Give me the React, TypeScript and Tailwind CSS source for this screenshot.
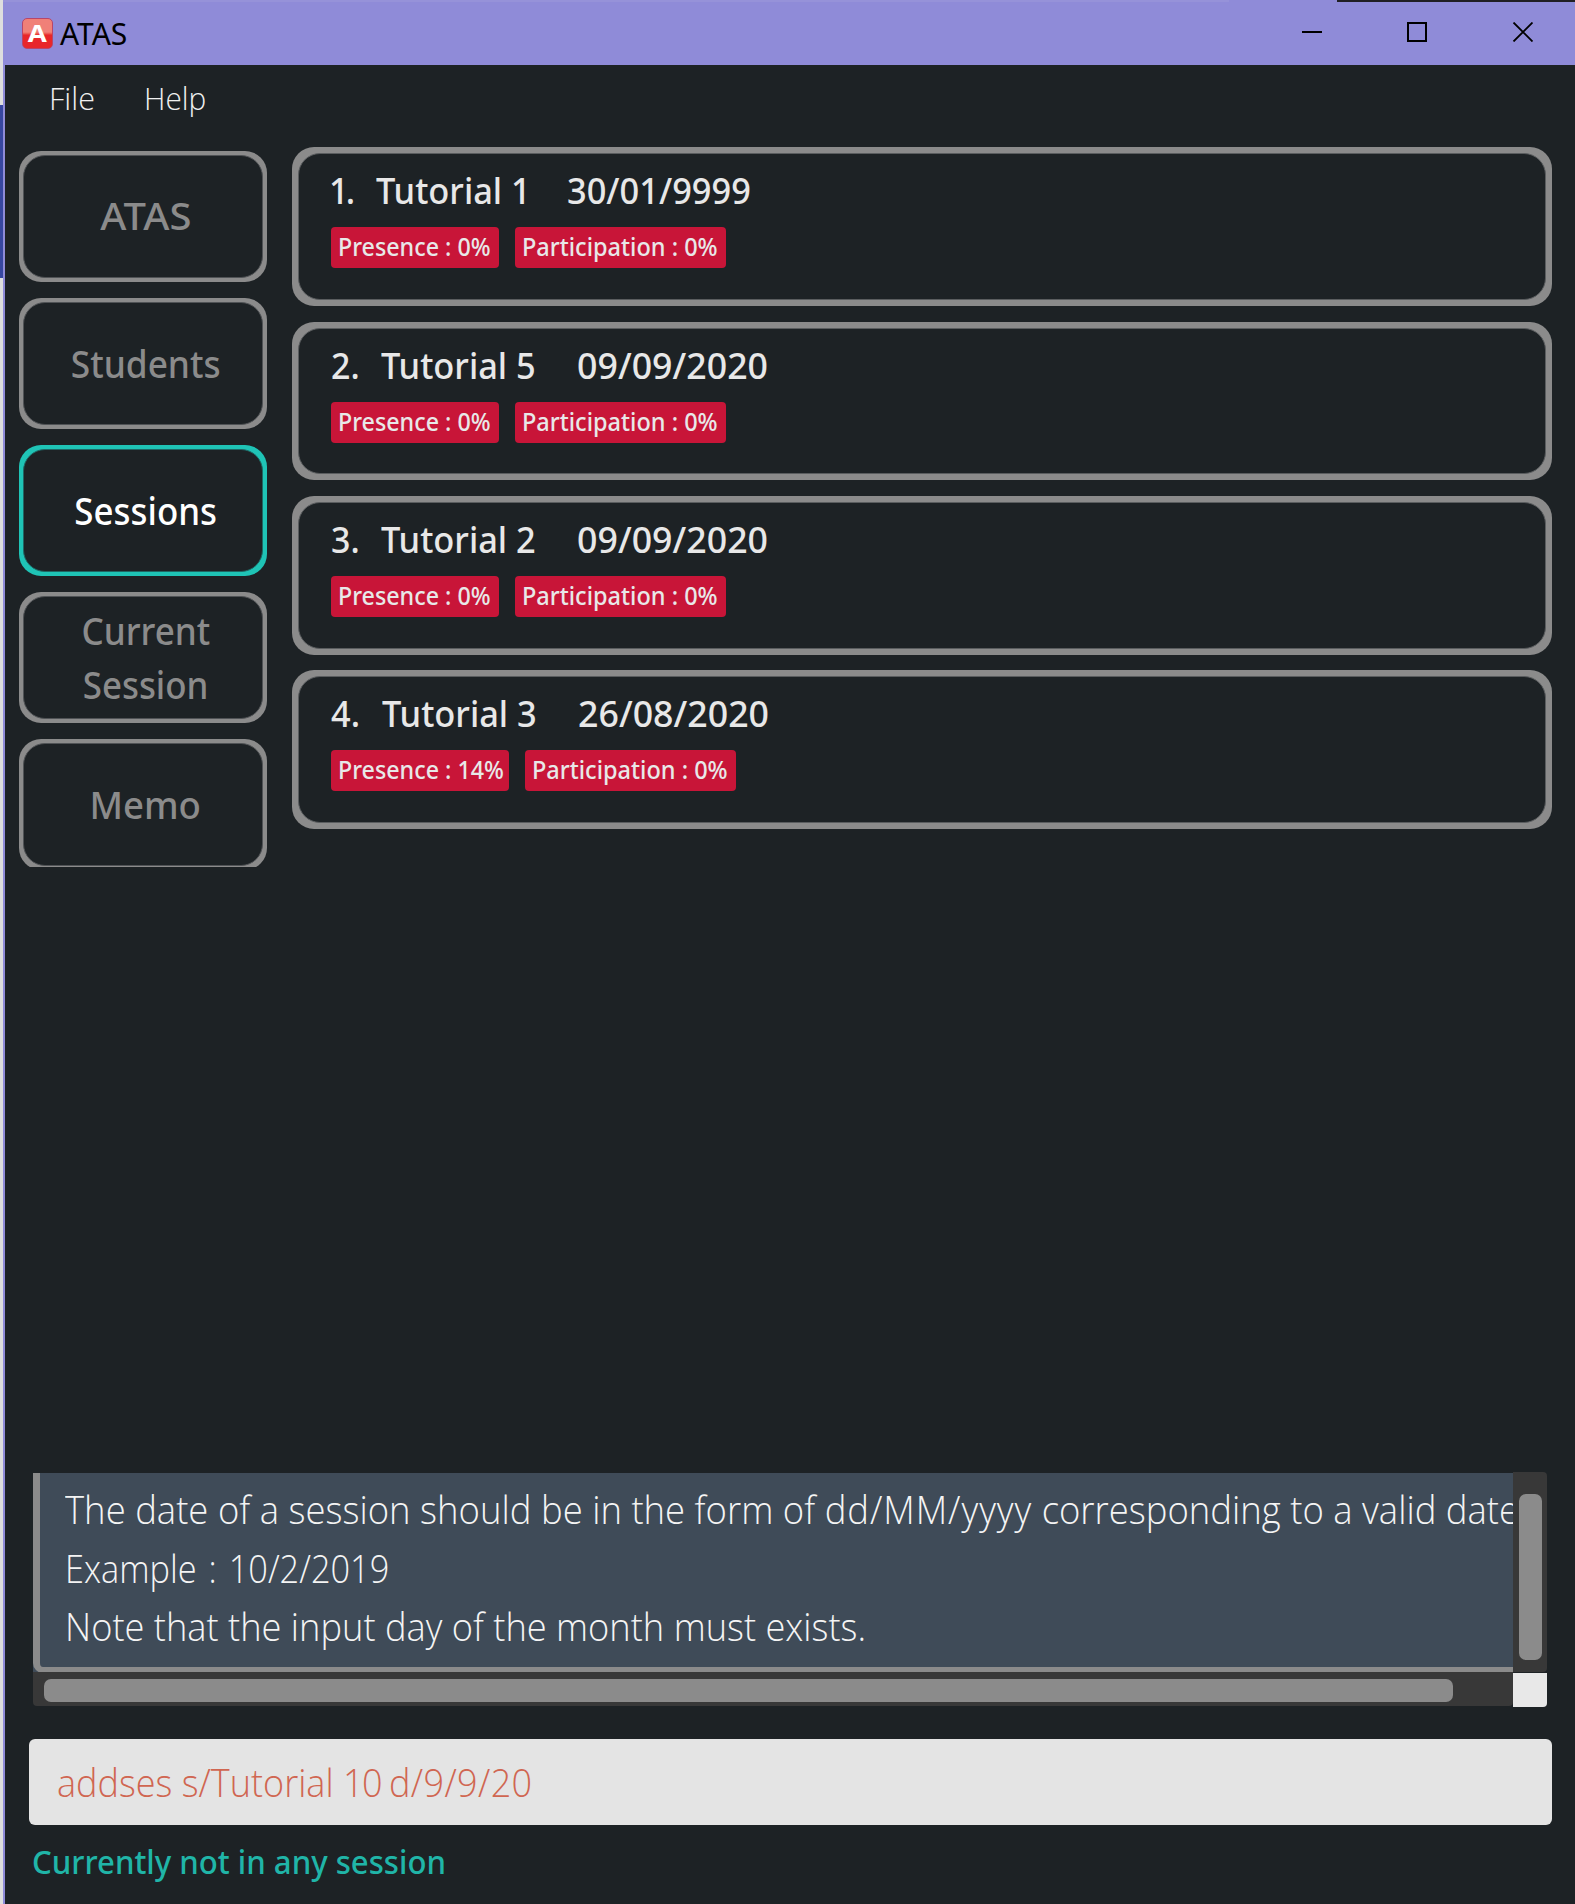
import type { ReactNode } from "react";

type Tab = { lines: { text: string; fit: string }[]; active?: boolean };

const tabs: Tab[] = [
  { lines: [{ text: "ATAS", fit: "scale-x-[1.065] pb-0.5" }] },
  { lines: [{ text: "Students", fit: "scale-x-[0.94]" }] },
  { lines: [{ text: "Sessions", fit: "scale-x-[0.93]" }], active: true },
  {
    lines: [
      { text: "Current", fit: "scale-x-[0.935]" },
      { text: "Session", fit: "scale-x-[0.93]" },
    ],
  },
  { lines: [{ text: "Memo", fit: "scale-x-[0.975]" }] },
];

type Session = {
  index: string;
  name: string;
  date: string;
  indexFit: string;
  indexWidth: string;
  nameWidth: string;
  dateFit: string;
  presence: string;
  presenceWidth: string;
  participation: string;
};

const sessions: Session[] = [
  {
    index: "1.",
    name: "Tutorial 1",
    date: "30/01/9999",
    indexFit: "scale-x-[0.94] -ml-0.5 tracking-[-3px]",
    indexWidth: "w-[45px]",
    nameWidth: "w-[191px]",
    dateFit: "scale-x-[0.942]",
    presence: "0%",
    presenceWidth: "w-[168px]",
    participation: "0%",
  },
  {
    index: "2.",
    name: "Tutorial 5",
    date: "09/09/2020",
    indexFit: "scale-x-[0.93]",
    indexWidth: "w-[50px]",
    nameWidth: "w-[196px]",
    dateFit: "scale-x-[0.979]",
    presence: "0%",
    presenceWidth: "w-[168px]",
    participation: "0%",
  },
  {
    index: "3.",
    name: "Tutorial 2",
    date: "09/09/2020",
    indexFit: "scale-x-[0.93]",
    indexWidth: "w-[50px]",
    nameWidth: "w-[196px]",
    dateFit: "scale-x-[0.979]",
    presence: "0%",
    presenceWidth: "w-[168px]",
    participation: "0%",
  },
  {
    index: "4.",
    name: "Tutorial 3",
    date: "26/08/2020",
    indexFit: "scale-x-[0.94]",
    indexWidth: "w-[51px]",
    nameWidth: "w-[196px]",
    dateFit: "scale-x-[0.979]",
    presence: "14%",
    presenceWidth: "w-[178px]",
    participation: "0%",
  },
];

function Fit({ className, children }: { className: string; children: ReactNode }) {
  return <span className={`inline-block origin-left whitespace-nowrap ${className}`}>{children}</span>;
}

function TitleBar() {
  return (
    <header className="flex h-[65px] shrink-0 flex-col bg-[#8f8bd8]">
      <div className="flex h-0.5 shrink-0">
        <div className="w-[1226px] bg-[#9692d9]" />
        <div className="w-[108px]" />
        <div className="flex-1 bg-[#201f24]" />
      </div>
      <div className="flex flex-1 items-center pl-[19px]">
        <div className="flex h-[31px] w-[31px] items-center justify-center rounded-[5px] border border-[#b8466a] bg-linear-to-b from-[#f08078] from-45% to-[#e8262a] to-55%">
          <span className="inline-block scale-x-[1.15] pb-0.5 font-['Open_Sans'] text-[24px] leading-none font-bold text-white">
            A
          </span>
        </div>
        <span className="ml-[7px] font-['Noto_Sans'] text-[30px] leading-[61px] text-black">ATAS</span>
        <svg
          className="mr-[42px] mb-[3px] ml-auto block"
          width="231"
          height="20"
          viewBox="0 0 231 20"
          fill="none"
          stroke="#000"
          strokeWidth="2"
        >
          <path d="M0 10H20" />
          <path d="M106 1H124V19H106Z" />
          <path d="M211.5 0.5L230.5 19.5M230.5 0.5L211.5 19.5" strokeWidth="1.8" />
        </svg>
      </div>
    </header>
  );
}

function TabButton({ tab }: { tab: Tab }) {
  return (
    <button
      className={`flex h-[131px] w-[248px] shrink-0 rounded-[22px] p-1 ${tab.active ? "bg-[#1fc4b6]" : "bg-[#8b8b8b]"}`}
    >
      <span
        className={`flex flex-1 flex-col items-center justify-center self-stretch rounded-[22px] border bg-[#1d2225] pl-[5px] font-['Noto_Sans'] text-[37.5px] leading-[54px] font-medium ${
          tab.active ? "border-[#1f6764] text-white" : "border-[#505356] text-[#8b8b8b]"
        }`}
      >
        {tab.lines.map((line) => (
          <span key={line.text} className={`block ${line.fit}`}>
            {line.text}
          </span>
        ))}
      </span>
    </button>
  );
}

function SessionCard({ s }: { s: Session }) {
  return (
    <li className="flex h-[158.6px] shrink-0 rounded-[22px] bg-[#8b8b8b] p-1.5">
      <div className="flex-1 rounded-[22px] border border-[#5a5d5f] bg-[#1d2225] pt-[11px] pl-8 text-[#e8e8e8]">
        <div className="flex font-['Noto_Sans'] text-[36.5px] leading-[50px] font-medium">
          <div className={s.indexWidth}>
            <Fit className={s.indexFit}>{s.index}</Fit>
          </div>
          <div className={s.nameWidth}>
            <Fit className="scale-x-[0.942]">{s.name}</Fit>
          </div>
          <Fit className={s.dateFit}>{s.date}</Fit>
        </div>
        <div className="mt-3 flex gap-4 font-['Noto_Sans'] text-[24.5px] leading-[39px] font-medium">
          <div className={`h-[41px] rounded bg-[#c81538] pl-[7px] ${s.presenceWidth}`}>
            <Fit className="scale-x-[0.95]">Presence : {s.presence}</Fit>
          </div>
          <div className="h-[41px] w-[211px] rounded bg-[#c81538] pl-[7px]">
            <Fit className="scale-x-[0.96]">Participation : {s.participation}</Fit>
          </div>
        </div>
      </div>
    </li>
  );
}

function ResultDisplay() {
  return (
    <section className="ml-7 grid h-[234px] w-[1514px] shrink-0 grid-cols-[1480px_34px] grid-rows-[200px_34px]">
      <div className="mt-px overflow-hidden bg-[#3f4b58]">
        <div className="h-[200px] w-[1600px] rounded-bl-[10px] border-b-[6px] border-l-[7px] border-[#8b8b8b] pt-[7px] pl-[25px] font-['Open_Sans'] text-[39px] leading-[58.6px] font-light text-[#f4f4f4]">
          <p>
            <Fit className="scale-x-[0.935]">
              The date of a session should be in the form of <span className="tracking-[1px]">dd/MM/yyyy</span>{" "}
              corresponding to a valid date.
            </Fit>
          </p>
          <p>
            <Fit className="scale-x-[0.88] [word-spacing:3.5px]">Example : 10/2/2019</Fit>
          </p>
          <p>
            <Fit className="scale-x-[0.929]">Note that the input day of the month must exists.</Fit>
          </p>
        </div>
      </div>
      <div className="rounded-r bg-[#383838] pt-[22px] pl-1.5">
        <div className="h-[166px] w-[23px] rounded-[7px] bg-[#8b8b8b]" />
      </div>
      <div className="rounded-b bg-[#383838] pt-[7px] pl-[11px]">
        <div className="h-[23px] w-[1409px] rounded-[7px] bg-[#8b8b8b]" />
      </div>
      <div className="mt-px -mb-px rounded-br bg-[#e8e8e8]" />
    </section>
  );
}

export default function App() {
  return (
    <div className="flex h-[1904px] w-[1575px] overflow-hidden bg-[#1d2225]">
      <div className="flex w-[3px] shrink-0 flex-col bg-[#dedede]">
        <div className="mt-[105px] h-[173px] bg-[#3747a0]" />
      </div>
      <div className="flex flex-1 flex-col">
        <TitleBar />
        <div className="flex flex-1 flex-col border-l-2 border-[#8f8bd8]">
          <nav className="flex h-[82px] shrink-0 pl-11 font-['Open_Sans'] text-[32px] leading-[65px] font-light text-[#f0f0f0]">
            <div className="w-[95px]">
              <Fit className="scale-x-[0.955]">File</Fit>
            </div>
            <Fit className="scale-x-[0.93]">Help</Fit>
          </nav>
          <main className="flex h-[1325px] shrink-0 pl-3.5">
            <div className="mt-1 flex h-[716px] w-[248px] shrink-0 flex-col gap-4 overflow-hidden">
              {tabs.map((tab) => (
                <TabButton key={tab.lines[0].text} tab={tab} />
              ))}
            </div>
            <ul className="mt-[0.33px] ml-[25px] flex w-[1260px] flex-col gap-[15.73px]">
              {sessions.map((s) => (
                <SessionCard key={s.index} s={s} />
              ))}
            </ul>
          </main>
          <ResultDisplay />
          <div className="mt-[33px] ml-6 h-[86px] w-[1523px] shrink-0 rounded-md bg-[#e4e4e4] pl-7 font-['Open_Sans'] text-[39px] leading-[86px] font-light text-[#d06651]">
            <Fit className="scale-x-[0.924]">
              addses s/Tutorial <span className="tracking-[-1.6px]">10 </span>
              <span className="tracking-[0.4px]">d/9/9/20</span>
            </Fit>
          </div>
          <footer className="pl-[27px] font-['Noto_Sans'] text-[32.5px] leading-[73px] font-medium text-[#20b5a8]">
            <Fit className="scale-x-[0.958]">Currently not in any session</Fit>
          </footer>
        </div>
      </div>
    </div>
  );
}
